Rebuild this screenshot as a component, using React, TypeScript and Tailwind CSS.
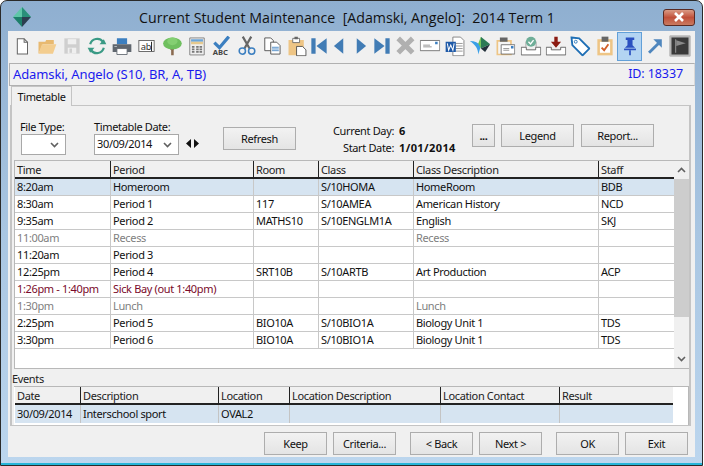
import React from "react";

const Doc = () => (
  <svg width="24" height="24" viewBox="0 0 24 24" fill="none">
    <path d="M6.500 3.500h8l4 4v14h-12z" fill="#fff" stroke="#666" strokeWidth="1.200" />
    <path d="M14.500 3.500v4h4" stroke="#666" strokeWidth="1.200" />
  </svg>
);
const Folder = () => (
  <svg width="24" height="24" viewBox="0 0 24 24">
    <path d="M2 7h8l1-2h9v5H7l-5 11z" fill="#e8b970" />
    <path d="M2 21l4-11h17l-4 11z" fill="#f3cd8f" />
  </svg>
);
const Save = () => (
  <svg width="24" height="24" viewBox="0 0 24 24">
    <path d="M3 3h18v18H3z" fill="#cfcfcf" />
    <path d="M7 4h10v6H7z" fill="#efefef" />
    <path d="M7 14h10v7H7z" fill="#efefef" />
    <path d="M9 15h3v5H9z" fill="#cfcfcf" />
  </svg>
);
const Refresh = () => (
  <svg width="24" height="24" viewBox="0 0 24 24" fill="none">
    <path d="M4 10a8.500 8.500 0 0 1 15-3" stroke="#3a9a85" strokeWidth="2.600" />
    <path d="M20 14a8.500 8.500 0 0 1-15 3" stroke="#3a9a85" strokeWidth="2.600" />
    <path d="M23 10h-8l5-6z" fill="#3a9a85" />
    <path d="M1 14h8l-5 6z" fill="#3a9a85" />
  </svg>
);
const Printer = () => (
  <svg width="24" height="24" viewBox="0 0 24 24">
    <path d="M6 3h12v7H6z" fill="#3c7fc0" />
    <path d="M1 10h22v9H1z" fill="#5f666e" />
    <path d="M6 15h12v7H6z" fill="#fff" stroke="#5f666e" />
    <path d="M3 12h3v1H3z" fill="#cfd4d8" />
  </svg>
);
const TextBox = () => (
  <div className="w-[19px] h-[14px] border border-[#555] bg-white flex items-center justify-center text-[11px] leading-none text-[#333]">
    ab<span className="w-px h-[11px] bg-black" />
  </div>
);
const Tree = () => (
  <svg width="24" height="24" viewBox="0 0 24 24">
    <path d="M11 13h3v10h-3z" fill="#8a6a50" />
    <path d="M8 14l4 2 4-2-3 3h-2z" fill="#8a6a50" />
    <ellipse cx="12.500" cy="9" rx="11" ry="7" fill="#6fbf5f" />
    <ellipse cx="12.500" cy="6.500" rx="6" ry="4.500" fill="#84cf72" />
  </svg>
);
const Calc = () => (
  <svg width="24" height="24" viewBox="0 0 24 24">
    <path d="M3.500 2.500h17v20h-17z" fill="#efefef" stroke="#777" />
    <path d="M5 4h14v3H5z" fill="#6aa5d8" />
    <path d="M5 7h14v3H5z" fill="#e5c98e" />
    <path d="M6 12h3v2H6zM11 12h3v2h-3zM15 12h3v2h-3zM6 15h3v2H6zM11 15h3v2h-3zM15 15h3v2h-3zM6 18h3v2H6zM11 18h3v2h-3zM15 18h3v2h-3z" fill="#777" />
  </svg>
);
const Spell = () => (
  <div className="relative w-[24px] h-[24px]">
    <svg width="24" height="24" viewBox="0 0 24 24" fill="none">
      <path d="M3 8l6 6 11-13" stroke="#3c7fc0" strokeWidth="3.800" />
    </svg>
    <span className="absolute left-[1px] top-[14px] text-[9px] leading-[10px] font-bold text-[#444] tracking-normal">ABC</span>
  </div>
);
const Scissors = () => (
  <svg width="24" height="24" viewBox="0 0 24 24" fill="none">
    <path d="M7 1l8 14M17 1L9 15" stroke="#666" strokeWidth="2.600" />
    <circle cx="6.500" cy="18" r="3.700" stroke="#3c7fc0" strokeWidth="1.800" />
    <circle cx="17.500" cy="18" r="3.700" stroke="#3c7fc0" strokeWidth="1.800" />
  </svg>
);
const Copy = () => (
  <svg width="24" height="24" viewBox="0 0 24 24" fill="none">
    <path d="M3.500 2.500h7l3 3v12h-10z" fill="#fff" stroke="#444" />
    <path d="M10.500 7.500h7l4 4v10h-11z" fill="#fff" stroke="#444" />
    <path d="M12 13.500h8M12 15.500h8M12 17.500h8" stroke="#3c7fc0" />
  </svg>
);
const Paste = () => (
  <svg width="24" height="24" viewBox="0 0 24 24">
    <path d="M2 5h18v18H2z" fill="#eec585" />
    <path d="M7 3h8v5H7z" fill="#fff" stroke="#666" />
    <path d="M9 1h4v3H9z" fill="#666" />
    <path d="M11.500 12.500h7l4 4v7h-11z" fill="#fff" stroke="#444" />
  </svg>
);
const First = () => (
  <svg width="20" height="24" viewBox="0 0 20 24" fill="#417cb5">
    <path d="M1 3h5v18H1zM7 12L19 3v18z" />
  </svg>
);
const Prev = () => (
  <svg width="20" height="24" viewBox="0 0 20 24" fill="#417cb5">
    <path d="M4 12L15 3v18z" />
  </svg>
);
const Play = () => (
  <svg width="20" height="24" viewBox="0 0 20 24" fill="#417cb5">
    <path d="M16 12L5 3v18z" />
  </svg>
);
const Last = () => (
  <svg width="20" height="24" viewBox="0 0 20 24" fill="#417cb5">
    <path d="M19 3h-5v18h5zM13 12L1 3v18z" />
  </svg>
);
const Cross = () => (
  <svg width="24" height="24" viewBox="0 0 24 24" fill="none">
    <path d="M4 3l17 17M21 3L4 20" stroke="#b0b0b0" strokeWidth="6" />
  </svg>
);
const Envelope = () => (
  <svg width="24" height="24" viewBox="0 0 24 24" fill="none">
    <path d="M0.500 5.500h23v12h-23z" fill="#fff" stroke="#666" />
    <path d="M4 11h8M4 13h10" stroke="#888" />
    <path d="M18 7h3v3h-3z" fill="#3c7fc0" />
  </svg>
);
const Word = () => (
  <svg width="24" height="24" viewBox="0 0 24 24" fill="none">
    <path d="M9.500 1.500h9l4 4v18h-13z" fill="#fff" stroke="#777" />
    <path d="M13 9h8M13 12h8M13 15h8M13 18h8" stroke="#888" />
    <path d="M1 7h12v12H1z" fill="#1f5aa8" />
    <path d="M3 9l1.500 8 2.500-6 2.500 6L11 9" stroke="#fff" strokeWidth="1.200" />
  </svg>
);
const Send = () => (
  <svg width="24" height="24" viewBox="0 0 24 24">
    <path d="M0 6c6 0 10 2 13 6l-3 10c0-7-4-12-10-16z" fill="#3aa0e8" />
    <path d="M13 1l11 9-11 5z" fill="#2c7a55" />
    <path d="M13 1l-3 8 3 6z" fill="#6bc24a" />
    <path d="M13 15l11-5-6 9z" fill="#22303a" />
  </svg>
);
const ClipEnvelope = () => (
  <svg width="24" height="24" viewBox="0 0 24 24">
    <path d="M2 5h18v18H2z" fill="#eec585" />
    <path d="M4 7h14v14H4z" fill="#f5f5f5" />
    <path d="M6 2h9v5H6z" fill="#666" />
    <path d="M7.500 10.500h16v11h-16z" fill="#fff" stroke="#666" />
    <path d="M10 15h7M10 17h7" stroke="#888" />
    <path d="M19 12h3v3h-3z" fill="#3c7fc0" />
  </svg>
);
const TrayCheck = () => (
  <svg width="24" height="24" viewBox="0 0 24 24" fill="none">
    <path d="M0.500 13.500h6v3h11v-3h6v9h-23z" fill="#fff" stroke="#555" />
    <path d="M6 13V7h12v6" stroke="#999" />
    <circle cx="12" cy="7" r="6" fill="#6fae98" />
    <path d="M9 7l2.500 2.500L15 5" stroke="#fff" strokeWidth="1.600" />
  </svg>
);
const TrayDown = () => (
  <svg width="24" height="24" viewBox="0 0 24 24" fill="none">
    <path d="M0.500 13.500h6v3h11v-3h6v9h-23z" fill="#fff" stroke="#555" />
    <path d="M10 1h4v6h4l-6 7-6-7h4z" fill="#8c1c13" />
  </svg>
);
const Tag = () => (
  <svg width="24" height="24" viewBox="0 0 24 24" fill="none">
    <path d="M2 2l9 1 12 12-8 8L3 11z" fill="#fff" stroke="#1f6fb5" strokeWidth="2.200" />
    <circle cx="7" cy="7" r="1.700" stroke="#1f6fb5" />
  </svg>
);
const ClipCheck = () => (
  <svg width="24" height="24" viewBox="0 0 24 24" fill="none">
    <path d="M3 4h18v19H3z" fill="#eec585" />
    <path d="M6 7h12v13H6z" fill="#fff" />
    <path d="M8 1h8v6H8z" fill="#666" />
    <path d="M8 14l3 3 5-7" stroke="#d2602a" strokeWidth="2.200" />
  </svg>
);
const Pin = () => (
  <svg width="24" height="24" viewBox="0 0 24 24" fill="#2b50c0">
    <path d="M7 2h10v3h-2v6l3 3H6l3-3V5H7z" />
    <path d="M5 15h14v2H5z" />
    <path d="M11 17h2v6h-2z" />
  </svg>
);
const ArrowUp = () => (
  <svg width="24" height="24" viewBox="0 0 24 24" fill="none">
    <path d="M5 20L16 9" stroke="#4f86bd" strokeWidth="3.400" />
    <path d="M10 4h10v10z" fill="#4f86bd" />
  </svg>
);
const Flag = () => (
  <div className="w-[24px] h-[24px] border-2 border-[#b5b5b5] bg-[#3a3a3a] flex items-center justify-center">
    <svg width="18" height="18" viewBox="0 0 16 16">
      <path d="M3 1h1v14H3z" fill="#999" />
      <path d="M4 2l10 3-10 3z" fill="#8a8a8a" />
    </svg>
  </div>
);

const tools = [
  { el: <Doc />, w: "w-[25px]" },
  { el: <Folder />, w: "w-[25px]" },
  { el: <Save />, w: "w-[25px]" },
  { el: <Refresh />, w: "w-[25px]" },
  { el: <Printer />, w: "w-[25px]" },
  { el: <TextBox />, w: "w-[25px]" },
  { el: <Tree />, w: "w-[25px]" },
  { el: <Calc />, w: "w-[25px]" },
  { el: <Spell />, w: "w-[25px]" },
  { el: <Scissors />, w: "w-[25px]" },
  { el: <Copy />, w: "w-[25px]" },
  { el: <Paste />, w: "w-[25px]" },
  { el: <First />, w: "w-[20px]" },
  { el: <Prev />, w: "w-[20px]" },
  { el: <Play />, w: "w-[23px]" },
  { el: <Last />, w: "w-[20px]" },
  { el: <Cross />, w: "w-[25px]" },
  { el: <Envelope />, w: "w-[25px]" },
  { el: <Word />, w: "w-[25px]" },
  { el: <Send />, w: "w-[25px]" },
  { el: <ClipEnvelope />, w: "w-[25px]" },
  { el: <TrayCheck />, w: "w-[27px]" },
  { el: <TrayDown />, w: "w-[24px]" },
  { el: <Tag />, w: "w-[24px]" },
  { el: <ClipCheck />, w: "w-[25px]" },
  { el: <Pin />, w: "w-[25px] h-[29px] bg-[#b3d4f2] border border-[#62a0d8]" },
  { el: <ArrowUp />, w: "w-[25px]" },
  { el: <Flag />, w: "w-[25px]" },
];

const timetableCols = ["w-[96px]", "w-[143px]", "w-[65px]", "w-[95px]", "w-[185px]", "w-[75px]"];
const eventCols = ["w-[66px]", "w-[138px]", "w-[71px]", "w-[151px]", "w-[119px]", "w-[113px]"];

const normal = "text-[#111]";
const muted = "text-[#808080]";
const sick = "text-[#7a0a2a]";

const rows = [
  { cells: ["8:20am", "Homeroom", "", "S/10HOMA", "HomeRoom", "BDB"], tone: normal, selected: true },
  { cells: ["8:30am", "Period 1", "117", "S/10AMEA", "American History", "NCD"], tone: normal },
  { cells: ["9:35am", "Period 2", "MATHS10", "S/10ENGLM1A", "English", "SKJ"], tone: normal },
  { cells: ["11:00am", "Recess", "", "", "Recess", ""], tone: muted },
  { cells: ["11:20am", "Period 3", "", "", "", ""], tone: normal },
  { cells: ["12:25pm", "Period 4", "SRT10B", "S/10ARTB", "Art Production", "ACP"], tone: normal },
  { cells: ["1:26pm - 1:40pm", "Sick Bay (out 1:40pm)", "", "", "", ""], tone: sick },
  { cells: ["1:30pm", "Lunch", "", "", "Lunch", ""], tone: muted },
  { cells: ["2:25pm", "Period 5", "BIO10A", "S/10BIO1A", "Biology Unit 1", "TDS"], tone: normal },
  { cells: ["3:30pm", "Period 6", "BIO10A", "S/10BIO1A", "Biology Unit 1", "TDS"], tone: normal },
];

const HeaderRow = ({ labels, cols }: { labels: string[]; cols: string[] }) => (
  <div className="flex h-[18px] bg-[#f0f0f0] border-b-2 border-[#222]">
    {labels.map((label, i) => (
      <div key={label} className={`${cols[i]} shrink-0 pl-[2px] leading-[18px] border-r border-[#222] last:border-r-0 text-[#222]`}>
        {label}
      </div>
    ))}
  </div>
);

const Btn = ({ label, className = "" }: { label: string; className?: string }) => (
  <button className={`h-[23px] border border-[#adadad] bg-gradient-to-b from-[#f2f2f2] to-[#e4e4e4] text-[#111] leading-none ${className}`}>
    {label}
  </button>
);

const Chevron = ({ up = false }: { up?: boolean }) => (
  <svg width="9" height="6" viewBox="0 0 9 6" fill="none">
    <path d={up ? "M1 5l3.500-3.500L8 5" : "M1 1l3.500 3.500L8 1"} stroke="#606060" strokeWidth="1.600" />
  </svg>
);

const Combo = ({ value, className }: { value: string; className: string }) => (
  <div className={`h-[21px] border border-[#a8a8a8] bg-white flex items-center justify-between pl-[2px] pr-[6px] ${className}`}>
    <span>{value}</span>
    <Chevron />
  </div>
);

export default function App() {
  return (
    <div className="w-[704px] h-[466px] overflow-hidden bg-white font-['Noto_Sans',sans-serif] text-[11px] tracking-[-0.35px]">
      <div className="w-[703px] h-[466px] rounded-t-[7px] border border-[#2a2a2a] bg-gradient-to-b from-[#8fafd0] via-[#a9c6e2] to-[#bcd6ee] flex flex-col">
        <div className="h-[30px] shrink-0 flex items-center pl-[6px] pr-[7px]">
          <svg width="22" height="22" viewBox="0 0 22 22" className="ml-[4px] mt-[2px]">
            <path d="M11 1l9 10H2z" fill="#5fc6a8" />
            <path d="M2 11l9 10V11z" fill="#1d7f6a" />
            <path d="M20 11l-9 10V11z" fill="#2c3e50" />
            <path d="M11 1v10h9z" fill="#2a8f7a" />
          </svg>
          <div className="flex-1 text-center font-['Open_Sans',sans-serif] text-[14.2px] tracking-normal whitespace-pre text-[#111] pr-[2px] mt-[3px]">
            Current Student Maintenance  [Adamski, Angelo]:  2014 Term 1
          </div>
          <div className="w-[32px] h-[17px] mt-[2px] rounded-[3px] border border-[#5a2a22] bg-gradient-to-b from-[#d99a85] via-[#c0503a] to-[#c97a60] flex items-center justify-center">
            <svg width="12" height="10" viewBox="0 0 12 10" fill="none">
              <path d="M2 1l8 8M10 1L2 9" stroke="#fff" strokeWidth="2.600" />
            </svg>
          </div>
        </div>

        <div className="ml-[7px] w-[687px] h-[426px] shrink-0 bg-[#f0f0f0] flex flex-col">
          <div className="h-[30px] shrink-0 flex items-center pl-[1px]">
            {tools.map((t, i) => (
              <div key={i} className={`${t.w} shrink-0 flex items-center justify-center`}>
                <div className="scale-[0.85] flex items-center justify-center">{t.el}</div>
              </div>
            ))}
          </div>

          <div className="h-[23px] mt-[2px] shrink-0 ml-[1px] border border-[#b0b0b0] border-r-[#d8d8d8] flex items-center justify-between pl-[3px] pr-[11px] text-[#1a1aee] text-[13px] tracking-[-0.1px]">
            <span>Adamski, Angelo (S10, BR, A, TB)</span>
            <span className="text-[12.5px]">ID: 18337</span>
          </div>

          <div className="h-[19px] shrink-0 ml-[3px] flex">
            <div className="w-[61px] h-[20px] z-10 border border-b-0 border-[#c4c4c4] bg-[#f0f0f0] text-center leading-[19px] text-[#111]">
              Timetable
            </div>
          </div>

          <div className="ml-[2px] w-[681px] h-[321px] shrink-0 border border-[#c4c4c4] border-l-2 border-r-2 flex flex-col">
            <div className="h-[54px] shrink-0 flex text-[#111]">
              <div className="ml-[9px] w-[73px] shrink-0 pt-[13px]">
                <div className="h-[15px] leading-[15px] -ml-[1px]">File Type:</div>
                <Combo value="" className="w-[45px]" />
              </div>
              <div className="w-[91px] shrink-0 pt-[13px]">
                <div className="h-[15px] leading-[15px]">Timetable Date:</div>
                <Combo value="30/09/2014" className="w-[85px]" />
              </div>
              <div className="w-[38px] shrink-0 pt-[32px] flex items-start gap-[2px] pl-[1px]">
                <svg width="13" height="9" viewBox="0 0 13 9" className="mt-[1px]">
                  <path d="M5 0v9L0 4.500zM8 0v9l5-4.500z" fill="#111" />
                </svg>
              </div>
              <div className="w-[101px] shrink-0 pt-[21px]">
                <Btn label="Refresh" className="w-[73px]" />
              </div>
              <div className="w-[70px] shrink-0 pt-[16px] text-right">
                <div className="h-[17px] leading-[17px]">Current Day:</div>
                <div className="h-[17px] leading-[17px]">Start Date:</div>
              </div>
              <div className="w-[78px] shrink-0 pt-[16px] pl-[5px] font-bold tracking-[0.4px]">
                <div className="h-[17px] leading-[17px]">6</div>
                <div className="h-[17px] leading-[17px]">1/01/2014</div>
              </div>
              <div className="shrink-0 pt-[18px] flex gap-[6px]">
                <Btn label="..." className="w-[23px] font-bold" />
                <Btn label="Legend" className="w-[73px]" />
                <Btn label="Report..." className="w-[73px] ml-[1px]" />
              </div>
            </div>

            <div className="ml-[2px] w-[675px] h-[209px] shrink-0 border border-[#b8b8b8] bg-white flex">
              <div className="w-[659px] shrink-0">
                <HeaderRow labels={["Time", "Period", "Room", "Class", "Class Description", "Staff"]} cols={timetableCols} />
                {rows.map((row, r) => (
                  <div key={r} className={`flex h-[17px] border-b border-[#c8c8c8] ${row.selected ? "bg-[#d6e4f1]" : ""} ${row.tone}`}>
                    {row.cells.map((cell, i) => (
                      <div
                        key={i}
                        className={`${timetableCols[i]} shrink-0 pl-[2px] leading-[16px] whitespace-nowrap border-r border-[#c8c8c8] last:border-r-0`}
                      >
                        {cell}
                      </div>
                    ))}
                  </div>
                ))}
              </div>
              <div className="w-[15px] shrink-0 bg-[#f0f0f0] flex flex-col items-center">
                <div className="h-[18px] flex items-center justify-center"><Chevron up /></div>
                <div className="w-full h-[138px] bg-[#cdcdcd]" />
                <div className="flex-1" />
                <div className="h-[18px] flex items-center justify-center"><Chevron /></div>
              </div>
            </div>

            <div className="h-[17px] shrink-0 leading-[19px] text-[#222]">Events</div>

            <div className="ml-[2px] w-[675px] flex-1 border-t border-r border-[#b8b8b8] bg-white flex flex-col">
              <div className="w-[658px] ml-[1px]">
                <HeaderRow labels={["Date", "Description", "Location", "Location Description", "Location Contact", "Result"]} cols={eventCols} />
                <div className="flex h-[18px] bg-[#d6e4f1] text-[#111]">
                  {["30/09/2014", "Interschool sport", "OVAL2", "", "", ""].map((cell, i) => (
                    <div key={i} className={`${eventCols[i]} shrink-0 pl-[2px] leading-[17px] border-r border-[#c4c4c4] last:border-r-0`}>
                      {cell}
                    </div>
                  ))}
                </div>
              </div>
            </div>
          </div>

          <div className="flex-1 flex items-start pt-[6px] pl-[256px]">
            <Btn label="Keep" className="w-[63px]" />
            <Btn label="Criteria..." className="w-[63px] ml-[6px]" />
            <Btn label="< Back" className="w-[63px] ml-[14px]" />
            <Btn label="Next >" className="w-[63px] ml-[6px]" />
            <Btn label="OK" className="w-[63px] ml-[14px] border-[#3c8fdc]" />
            <Btn label="Exit" className="w-[63px] ml-[6px]" />
          </div>
        </div>

        <div className="flex-1" />
        <div className="h-[2px] shrink-0 bg-[#25b5d8]" />
      </div>
    </div>
  );
}
